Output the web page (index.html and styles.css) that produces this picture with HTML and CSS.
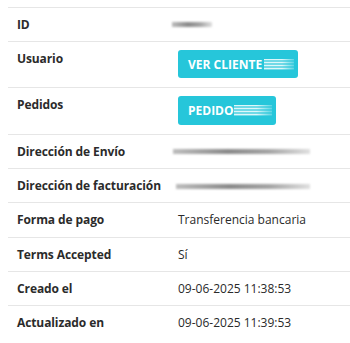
FILE: index.html
```html
<!DOCTYPE html>
<html lang="es">
<head>
    <meta charset="UTF-8">
    <meta name="viewport" content="width=device-width, initial-scale=1.0">
    <title>Detalle de cliente</title>
    <link rel="stylesheet" href="styles.css">
</head>
<body>
    <table class="details">
        <tr>
            <th>ID</th>
            <td><span class="redacted redacted-short"></span></td>
        </tr>
        <tr>
            <th>Usuario</th>
            <td class="action-cell">
                <a class="btn btn-client" href="#">Ver cliente <span class="btn-redacted"></span></a>
            </td>
        </tr>
        <tr>
            <th>Pedidos</th>
            <td class="action-cell">
                <a class="btn btn-order" href="#">Pedido<span class="btn-redacted"></span></a>
            </td>
        </tr>
        <tr>
            <th>Dirección de Envío</th>
            <td><span class="redacted redacted-long"></span></td>
        </tr>
        <tr>
            <th>Dirección de facturación</th>
            <td><span class="redacted redacted-long shifted"></span></td>
        </tr>
        <tr>
            <th>Forma de pago</th>
            <td>Transferencia bancaria</td>
        </tr>
        <tr>
            <th>Terms Accepted</th>
            <td>Sí</td>
        </tr>
        <tr>
            <th>Creado el</th>
            <td>09-06-2025 11:38:53</td>
        </tr>
        <tr>
            <th>Actualizado en</th>
            <td>09-06-2025 11:39:53</td>
        </tr>
    </table>
</body>
</html>
```

FILE: styles.css
```css
body {
    font-family: 'Open Sans', 'Liberation Sans', sans-serif;
    font-size: 12px;
    line-height: 1.42857;
    color: #333;
    background: #fff;
    margin: 7px 0 0 8px;
}

.details {
    width: 100%;
    border-collapse: collapse;
    table-layout: fixed;
}

.details th,
.details td {
    border-top: 1px solid #e6e6e6;
    padding: 8px 9px;
    text-align: left;
    vertical-align: top;
    white-space: nowrap;
}

.details th {
    width: 143px;
    font-weight: 700;
    color: #2b2b2b;
    letter-spacing: -0.1px;
}

.details td {
    color: #2a2a2a;
}

.action-cell {
    padding-bottom: 9px !important;
}

.btn {
    display: flex;
    align-items: center;
    height: 28px;
    padding: 0 10px;
    box-sizing: border-box;
    background-color: #26c6da;
    color: #fff;
    font-weight: 700;
    text-transform: uppercase;
    text-decoration: none;
    border-radius: 3px;
}

.btn-client {
    width: 120px;
}

.btn-order {
    width: 98px;
    height: 29px;
}

.btn-redacted {
    flex: 1;
    height: 11px;
    margin-left: 2px;
    margin-right: -6px;
    background: repeating-linear-gradient(180deg, rgba(255,255,255,0.85) 0 1px, rgba(255,255,255,0.35) 1px 3px);
    filter: blur(0.6px);
    -webkit-mask-image: linear-gradient(90deg, #000 60%, rgba(0,0,0,0.3));
    mask-image: linear-gradient(90deg, #000 60%, rgba(0,0,0,0.3));
}

.btn-order .btn-redacted {
    margin-left: 0;
}

.redacted {
    display: inline-block;
    height: 5px;
    vertical-align: middle;
    background: linear-gradient(90deg, #bdbdbd, #8a8a8a 40%, #a5a5a5 70%, #e0e0e0);
    filter: blur(1.2px);
    margin-top: -2px;
}

.redacted-short {
    width: 40px;
    margin-left: -6px;
}

.redacted-long {
    width: 137px;
    margin-left: -5px;
}

.redacted-long.shifted {
    width: 134px;
    margin-left: -2px;
}
```
